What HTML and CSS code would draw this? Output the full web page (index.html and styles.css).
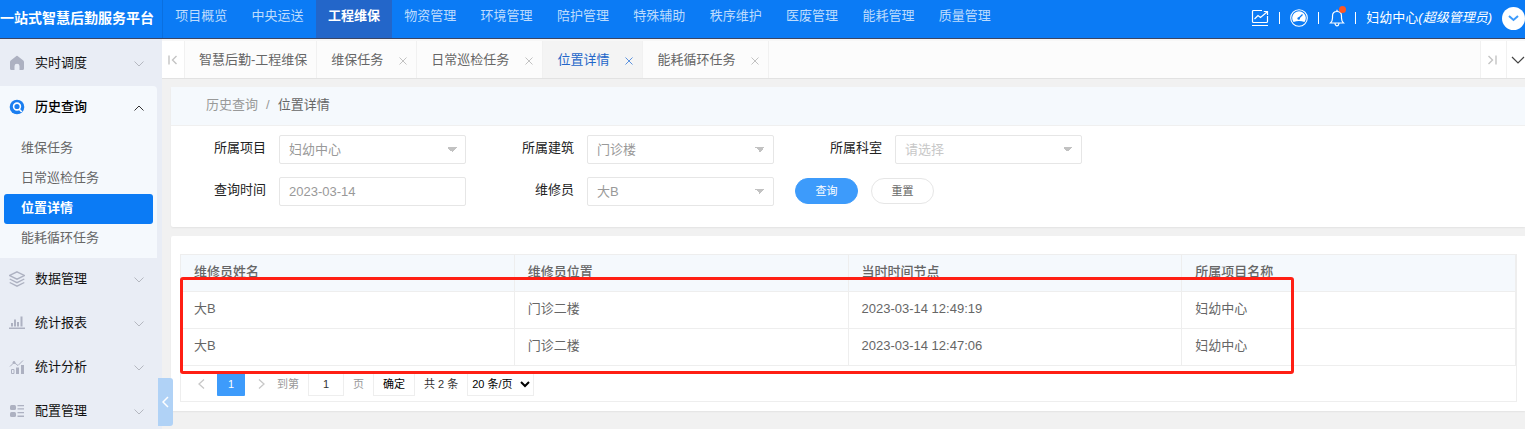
FILE: index.html
```
<!DOCTYPE html>
<html lang="zh-CN">
  <head>
    <meta charset="utf-8">
    <title>一站式智慧后勤服务平台</title>
    <link rel="stylesheet" href="styles.css">
  </head>
  <body>
    <header class="header">
      <div class="logo">一站式智慧后勤服务平台</div>
      <nav class="nav">
        <a href="#">项目概览</a>
        <a href="#">中央运送</a>
        <a href="#" class="active">工程维保</a>
        <a href="#">物资管理</a>
        <a href="#">环境管理</a>
        <a href="#">陪护管理</a>
        <a href="#">特殊辅助</a>
        <a href="#">秩序维护</a>
        <a href="#">医废管理</a>
        <a href="#">能耗管理</a>
        <a href="#">质量管理</a>
      </nav>
      <div class="tools">
        <button class="tool" aria-label="统计">
          <svg width="18" height="18" viewBox="0 0 18 18" fill="none" stroke="#fff" stroke-width="1.2">
            <path d="M11 1.5H2.5Q1.5 1.5 1.5 2.5V12.5Q1.5 13.5 2.5 13.5H15.5Q16.5 13.5 16.5 12.5V7M1 16.5H17M3.5 10L7 6.500L9.500 8.500L16 3M12.800 2.500H16.500V6"/>
          </svg>
        </button>
        <span class="sep"></span>
        <button class="tool" aria-label="仪表盘">
          <svg width="18" height="18" viewBox="0 0 18 18">
            <circle cx="9" cy="9" r="8.300" fill="none" stroke="#fff" stroke-width="1.100"/>
            <path d="M3.500 13A6.800 6.800 0 1 1 14.500 13Q9 10.800 3.500 13Z" fill="#fff"/>
            <path d="M8.500 9.500L12.500 5.500" stroke="#0b7bf5" stroke-width="1.200"/>
            <circle cx="8.700" cy="9.500" r="1.300" fill="#0b7bf5"/>
          </svg>
        </button>
        <span class="sep"></span>
        <button class="tool bell" aria-label="消息">
          <svg width="16" height="18" viewBox="0 0 16 18" fill="none" stroke="#fff" stroke-width="1.200">
            <path d="M1.500 14H14.500Q12.500 12 12.500 9V7Q12.500 2.500 8 2.500T3.500 7V9Q3.500 12 1.500 14ZM8 .8V2.500M6 14.500Q6.300 16.800 8 16.800T10 14.500"/>
          </svg>
          <i class="dot"></i>
        </button>
        <span class="sep"></span>
        <span class="user">妇幼中心<em>(超级管理员)</em></span>
        <button class="more" aria-label="更多">
          <svg width="11" height="7" viewBox="0 0 11 7" fill="none" stroke="#3d9bfb" stroke-width="2"><path d="M1 1L5.500 5L10 1"/></svg>
        </button>
      </div>
    </header>

    <div class="layout">
      <aside class="sidebar">
        <a href="#" class="menu">
          <svg class="icon" viewBox="0 0 16 16" fill="#adb1c1"><path d="M8 .8Q8.600 .8 9.200 1.400L14.300 5.500Q15 6.200 15 7V13.500Q15 15 13.500 15H10.500V11Q10.500 8.800 8 8.800T5.500 11V15H2.500Q1 15 1 13.500V7Q1 6.200 1.700 5.500L6.800 1.400Q7.400 .8 8 .8Z"/></svg>
          <span>实时调度</span>
          <svg class="arrow" viewBox="0 0 10 6"><path d="M.5 .5L5 5L9.500 .5"/></svg>
        </a>
        <div class="group">
          <a href="#" class="menu open">
            <svg class="icon" viewBox="0 0 16 16"><circle cx="8" cy="8" r="7.300" fill="#1a7ef0"/><circle cx="8" cy="7.500" r="3.400" fill="#1a7ef0" stroke="#fff" stroke-width="1.600"/><path d="M10 10L12.800 13" stroke="#fff" stroke-width="1.600"/></svg>
            <span>历史查询</span>
            <svg class="arrow" viewBox="0 0 10 6"><path d="M.5 5.500L5 1L9.500 5.500"/></svg>
          </a>
          <div class="submenu">
            <a href="#">维保任务</a>
            <a href="#">日常巡检任务</a>
            <a href="#" class="active">位置详情</a>
            <a href="#">能耗循环任务</a>
          </div>
        </div>
        <a href="#" class="menu">
          <svg class="icon" viewBox="0 0 16 16" fill="none" stroke="#adb1c1" stroke-width="1.400"><path d="M8 .8L15.300 4.500L8 8.200L.7 4.500ZM.7 8L8 11.700L15.300 8M.7 11.500L8 15.200L15.300 11.500"/></svg>
          <span>数据管理</span>
          <svg class="arrow" viewBox="0 0 10 6"><path d="M.5 .5L5 5L9.500 .5"/></svg>
        </a>
        <a href="#" class="menu">
          <svg class="icon" viewBox="0 0 16 16" fill="#adb1c1"><path d="M0 12.500H16V14H0ZM2 8H4V11.500H2ZM5 4.500H7V11.500H5ZM8 7H10V11.500H8ZM11.500 1.500H13.500V11.500H11.500Z"/></svg>
          <span>统计报表</span>
          <svg class="arrow" viewBox="0 0 10 6"><path d="M.5 .5L5 5L9.500 .5"/></svg>
        </a>
        <a href="#" class="menu">
          <svg class="icon" viewBox="0 0 16 16" fill="none" stroke="#adb1c1"><path d="M1 7.500L5 3.500L9 6.500L14 1.500M2.500 10.500H5V14.500H2.500Z"/><path d="M7 8.500H10V15H7ZM12 6H15V15H12Z" fill="#adb1c1" stroke="none"/><circle cx="5" cy="3.500" r="1" fill="#adb1c1"/></svg>
          <span>统计分析</span>
          <svg class="arrow" viewBox="0 0 10 6"><path d="M.5 .5L5 5L9.500 .5"/></svg>
        </a>
        <a href="#" class="menu">
          <svg class="icon" viewBox="0 0 16 16" fill="#adb1c1"><rect x="1" y="2" width="6" height="5" rx="1.500"/><rect x="1" y="9" width="6" height="5" rx="1.500"/><path d="M8.500 2H15V3.300H8.500ZM8.500 5.200H15V6.500H8.500ZM8.500 9H15V10.300H8.500ZM8.500 12.500H15V14H8.500Z"/></svg>
          <span>配置管理</span>
          <svg class="arrow" viewBox="0 0 10 6"><path d="M.5 .5L5 5L9.500 .5"/></svg>
        </a>
        <button class="collapse" aria-label="收起菜单">
          <svg width="7" height="12" viewBox="0 0 7 12" fill="none" stroke="#fff" stroke-width="1.500"><path d="M6 1L1 6L6 11"/></svg>
        </button>
      </aside>

      <main class="main">
        <div class="tabs">
          <button class="tab-btn" aria-label="向左">
            <svg width="10" height="10" viewBox="0 0 10 10" fill="none" stroke="#c4c4c4" stroke-width="1.400"><path d="M1 .5V9.500M8.500 1L4.500 5L8.500 9"/></svg>
          </button>
          <a href="#" class="tab">智慧后勤-工程维保</a>
          <a href="#" class="tab">维保任务<svg class="close" viewBox="0 0 8 8"><path d="M.5 .5L7.500 7.500M7.500 .5L.5 7.500"/></svg></a>
          <a href="#" class="tab">日常巡检任务<svg class="close" viewBox="0 0 8 8"><path d="M.5 .5L7.500 7.500M7.500 .5L.5 7.500"/></svg></a>
          <a href="#" class="tab active">位置详情<svg class="close" viewBox="0 0 8 8"><path d="M.5 .5L7.500 7.500M7.500 .5L.5 7.500"/></svg></a>
          <a href="#" class="tab">能耗循环任务<svg class="close" viewBox="0 0 8 8"><path d="M.5 .5L7.500 7.500M7.500 .5L.5 7.500"/></svg></a>
          <button class="tab-btn next" aria-label="向右">
            <svg width="10" height="10" viewBox="0 0 10 10" fill="none" stroke="#c4c4c4" stroke-width="1.400"><path d="M9 .5V9.500M1.500 1L5.500 5L1.500 9"/></svg>
          </button>
          <button class="tab-btn down" aria-label="标签操作">
            <svg width="14" height="8" viewBox="0 0 14 8" fill="none" stroke="#444" stroke-width="1.200"><path d="M1 1L7 7L13 1"/></svg>
          </button>
        </div>

        <section class="card">
          <div class="crumb"><a href="#">历史查询</a><span>/</span><b>位置详情</b></div>
          <form class="filter">
            <div class="field">
              <label for="project">所属项目</label>
              <select id="project"><option>妇幼中心</option></select>
            </div>
            <div class="field">
              <label for="building">所属建筑</label>
              <select id="building"><option>门诊楼</option></select>
            </div>
            <div class="field">
              <label for="dept">所属科室</label>
              <select id="dept" class="empty"><option>请选择</option></select>
            </div>
            <div class="field">
              <label for="date">查询时间</label>
              <input id="date" type="text" value="2023-03-14">
            </div>
            <div class="field">
              <label for="worker">维修员</label>
              <select id="worker"><option>大B</option></select>
            </div>
            <div class="actions">
              <button type="button" class="btn primary">查询</button>
              <button type="reset" class="btn">重置</button>
            </div>
          </form>
        </section>

        <section class="card list">
          <div class="table-box">
            <table class="table">
              <thead>
                <tr><th>维修员姓名</th><th>维修员位置</th><th>当时时间节点</th><th>所属项目名称</th></tr>
              </thead>
              <tbody>
                <tr><td>大B</td><td>门诊二楼</td><td>2023-03-14 12:49:19</td><td>妇幼中心</td></tr>
                <tr><td>大B</td><td>门诊二楼</td><td>2023-03-14 12:47:06</td><td>妇幼中心</td></tr>
              </tbody>
            </table>
            <div class="page">
              <button class="arrow-btn" aria-label="上一页"><svg width="7" height="10" viewBox="0 0 7 10" fill="none" stroke="#c8c8c8" stroke-width="1.300"><path d="M6 .5L1 5L6 9.500"/></svg></button>
              <button class="num">1</button>
              <button class="arrow-btn" aria-label="下一页"><svg width="7" height="10" viewBox="0 0 7 10" fill="none" stroke="#c8c8c8" stroke-width="1.300"><path d="M1 .5L6 5L1 9.500"/></svg></button>
              <label for="goto" class="muted">到第</label>
              <input id="goto" type="text" value="1">
              <span class="muted">页</span>
              <button class="ok">确定</button>
              <span>共 2 条</span>
              <select aria-label="每页条数"><option>20 条/页</option></select>
            </div>
            <div class="mark"></div>
          </div>
        </section>
      </main>
    </div>
  </body>
</html>
```
FILE: styles.css
```
* {
  box-sizing: border-box;
}

body {
  margin: 0;
  height: 100vh;
  display: flex;
  flex-direction: column;
  overflow: hidden;
  background: #f1f1f1;
  color: #666;
  font: 13px/20px "Liberation Sans", "Noto Sans CJK SC", sans-serif;
}

a {
  color: inherit;
  text-decoration: none;
}

button, input, select {
  margin: 0;
  font: inherit;
  color: inherit;
}

button {
  padding: 0;
  border: none;
  background: none;
  cursor: pointer;
}

/* top bar */
.header {
  display: flex;
  flex: none;
  height: 39px;
  background: #0b7bf5;
  border-bottom: 1px solid #3b4564;
  color: #fff;
}

.logo {
  flex: none;
  width: 163px;
  padding-top: 8px;
  border-right: 1px solid #0a6fdf;
  font-size: 14px;
  font-weight: bold;
  white-space: nowrap;
  overflow: hidden;
}

.nav {
  display: flex;
  width: 840px;
}

.nav a {
  flex: 1;
  line-height: 32px;
  text-align: center;
  white-space: nowrap;
  color: #bddcfd;
}

.nav .active {
  background: #2366c9;
  color: #fff;
  font-weight: bold;
}

.tools {
  display: flex;
  align-items: center;
  gap: 10px;
  margin-left: auto;
  padding-bottom: 2px;
  white-space: nowrap;
}

.tool {
  display: flex;
}

.bell {
  position: relative;
}

.dot {
  position: absolute;
  top: -3px;
  right: -1px;
  width: 7px;
  height: 7px;
  border-radius: 50%;
  background: #ff5722;
}

.sep {
  width: 1px;
  height: 12px;
  background: #fff;
}

.more {
  display: flex;
  align-items: center;
  justify-content: center;
  width: 23px;
  height: 23px;
  border-radius: 50%;
  background: #fff;
}

.layout {
  display: flex;
  flex: 1;
  min-height: 0;
}

/* left menu */
.sidebar {
  position: relative;
  flex: none;
  width: 162px;
  padding-top: 3px;
  background: #e9edf5;
}

.menu {
  display: flex;
  align-items: center;
  height: 40px;
  margin-bottom: 4px;
  padding: 1px 18px 0 9px;
  color: #111;
}

.menu .icon {
  width: 16px;
  height: 16px;
  margin-right: 10px;
}

.menu .arrow {
  width: 10px;
  height: 6px;
  margin: 2px 0 0 auto;
  fill: none;
  stroke: #b5b8c0;
}

.group {
  width: 157px;
  background: #f5f9fd;
  border-radius: 0 4px 0 0;
}

.open {
  margin: 0;
  padding-right: 13px;
  font-weight: 500;
  color: #000;
}

.open .arrow {
  stroke: #333;
}

.submenu {
  padding: 8px 4px 4px;
}

.submenu a {
  display: block;
  height: 30px;
  padding-left: 17px;
  line-height: 27px;
  border-radius: 3px;
}

.submenu .active {
  background: #0b7bf5;
  color: #fff;
  font-weight: bold;
}

.collapse {
  position: absolute;
  right: -11px;
  bottom: 3px;
  z-index: 2;
  display: flex;
  align-items: center;
  justify-content: center;
  width: 15px;
  height: 48px;
  border-radius: 0 3px 3px 0;
  background: #b0d2f6;
}

.main {
  flex: 1;
  min-width: 0;
}

/* page tabs */
.tabs {
  display: flex;
  height: 40px;
  background: #fcfcfc;
  border-top: 2px solid #f7f7f7;
  border-bottom: 1px solid #e2e2e2;
}

.tab {
  display: flex;
  align-items: center;
  padding: 0 9px 0 14px;
  border-right: 1px solid #f1f1f1;
  white-space: nowrap;
}

.tab.active {
  background: #f4f4f4;
  color: #2366c9;
}

.close {
  width: 8px;
  height: 8px;
  margin: 3px 0 0 16px;
  fill: none;
  stroke: #c2c2c2;
}

.active .close {
  stroke: #5d93de;
}

.tab-btn {
  display: flex;
  flex: none;
  align-items: center;
  justify-content: center;
  width: 23px;
  background: #fff;
  border-right: 1px solid #f1f1f1;
}

.next {
  width: 27px;
  margin-left: auto;
  padding-right: 4px;
  border-left: 1px solid #f1f1f1;
}

.down {
  justify-content: flex-start;
  width: 18px;
  padding-left: 4px;
  border: none;
  overflow: hidden;
}

.down svg {
  flex: none;
}

/* content */
.card {
  margin: 8px 0 9px 9px;
  background: #fff;
  border-radius: 2px 0 0 2px;
  box-shadow: 0 1px 2px rgba(0, 0, 0, 0.06);
}

.crumb {
  display: flex;
  gap: 8px;
  height: 39px;
  padding: 8px 35px;
  background: #f5f9fd;
  border-bottom: 1px solid #f0f0f0;
  color: #999;
}

.crumb b {
  font-weight: normal;
  color: #666;
}

.filter {
  display: grid;
  grid-template-columns: repeat(3, 295px);
  gap: 13px;
  padding: 9px 0 21px;
}

.field {
  display: flex;
  gap: 13px;
}

.field label {
  flex: 1;
  padding-top: 3px;
  text-align: right;
  color: #222;
}

.field select,
.field input {
  width: 187px;
  height: 29px;
  padding: 0 9px;
  border: 1px solid #e6e6e6;
  border-radius: 2px;
  background: #fff;
  color: #999;
}

/* two gradient halves make the down triangle */
.field select {
  appearance: none;
  background:
    linear-gradient(to bottom right, #c2c2c2 50%, transparent 50%) no-repeat right 8px center / 5px 5px,
    linear-gradient(to bottom left, #c2c2c2 50%, transparent 50%) no-repeat right 13px center / 5px 5px;
}

.field .empty {
  color: #c8c8c8;
}

.actions {
  display: flex;
  gap: 13px;
  padding: 1px 8px;
}

.btn {
  width: 63px;
  height: 26px;
  border: 1px solid #e6e6e6;
  border-radius: 13px;
  font-size: 11px;
}

.btn.primary {
  background: #3d9bfb;
  border-color: #3d9bfb;
  color: #fff;
}

.list {
  padding: 18px 8px 9px 9px;
}

.table-box {
  position: relative;
  border: 1px solid #eee;
}

.table {
  width: 100%;
  table-layout: fixed;
  border-collapse: separate;
  border-spacing: 0;
}

.table th,
.table td {
  height: 37px;
  padding: 0 13px 2px;
  border: solid #eee;
  border-width: 0 1px 1px 0;
  text-align: left;
}

.table th {
  background: #f5f9fd;
  font-weight: 500;
}

.page {
  display: flex;
  align-items: center;
  height: 35px;
  padding: 0 4px;
  font-size: 11px;
  color: #333;
}

.arrow-btn {
  display: flex;
  justify-content: center;
  width: 32px;
}

.num {
  width: 28px;
  height: 24px;
  border-radius: 1px;
  background: #3d9bfb;
  color: #fff;
}

.muted {
  color: #999;
}

.page input {
  width: 36px;
  height: 24px;
  margin: 0 9px;
  padding: 0;
  border: 1px solid #eee;
  text-align: center;
}

.ok {
  width: 42px;
  height: 24px;
  margin: 0 9px;
  border: 1px solid #eee;
  color: #000;
}

.page select {
  width: 67px;
  height: 24px;
  margin-left: 9px;
  border: 1px solid #eee;
  background: #fff;
  color: #000;
}

/* highlight frame over the result rows */
.mark {
  position: absolute;
  top: 22px;
  left: -1px;
  width: 1114px;
  height: 97px;
  border: 3px solid #ff1f14;
  border-radius: 3px;
}
```
